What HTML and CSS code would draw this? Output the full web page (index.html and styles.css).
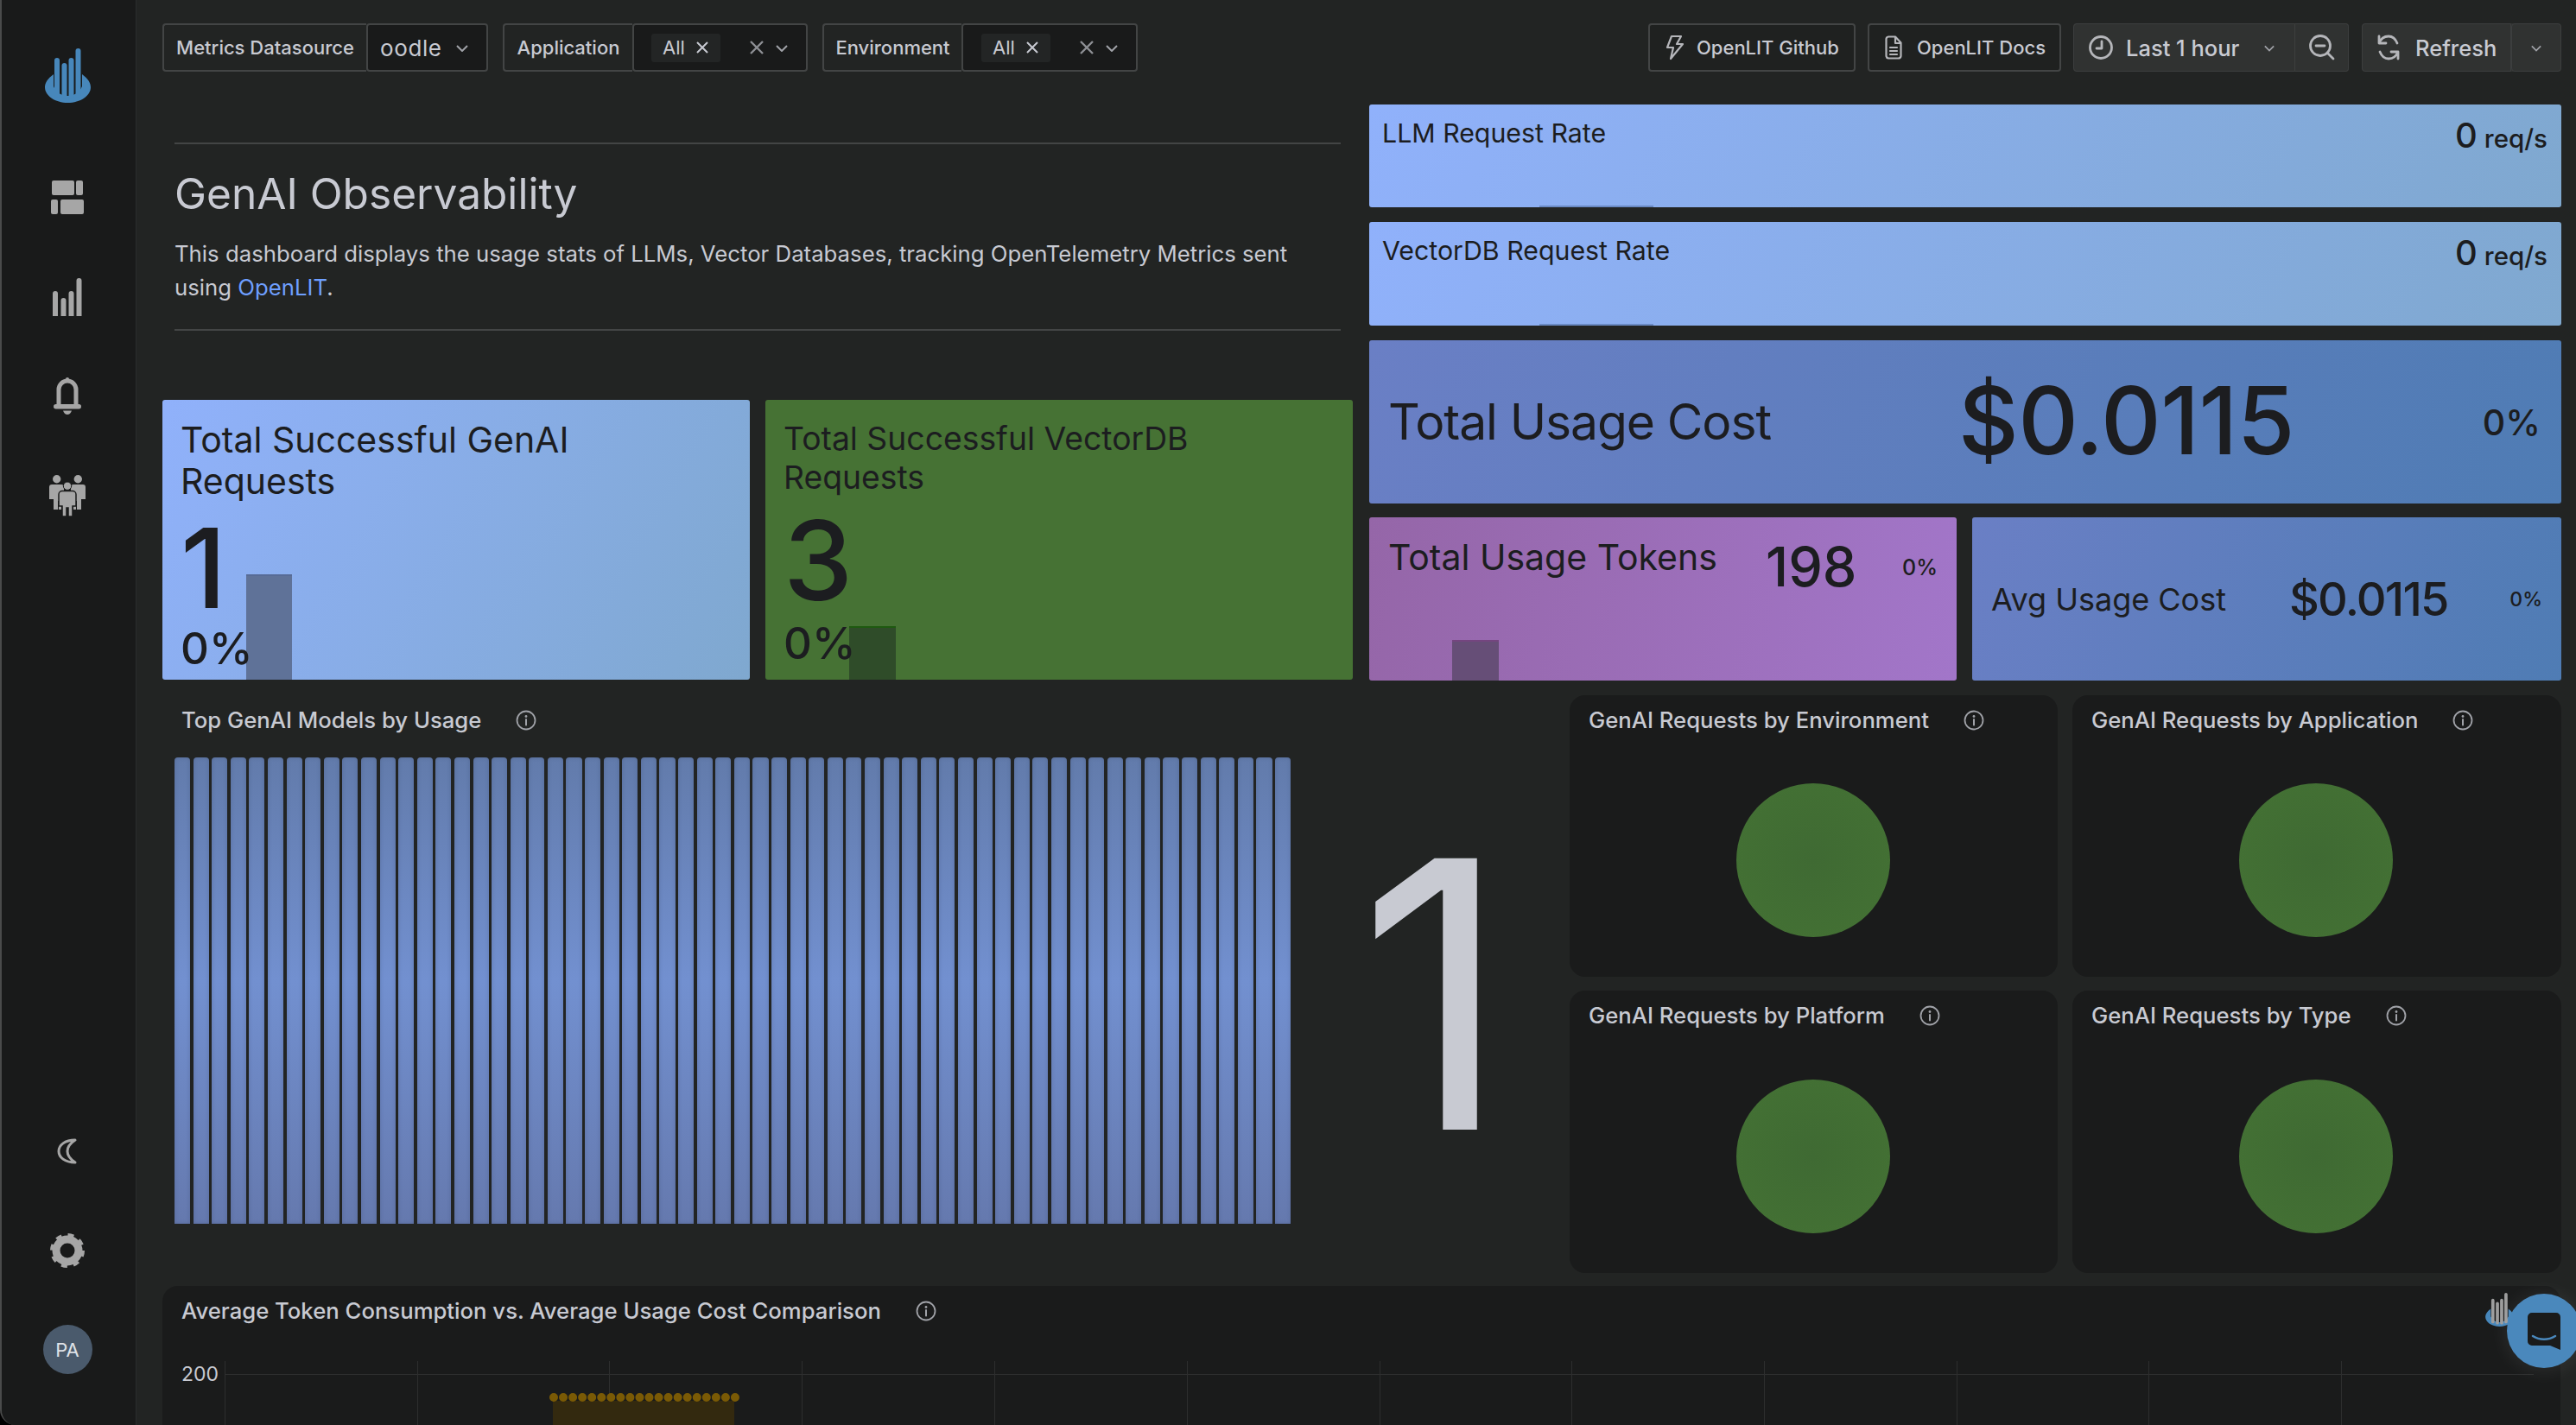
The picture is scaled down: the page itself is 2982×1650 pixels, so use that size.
FILE: index.html
```html
<!DOCTYPE html>
<html lang="en">
<head>
<meta charset="utf-8">
<title>GenAI Observability</title>
<link rel="stylesheet" href="styles.css">
</head>
<body>
<svg class="defs" width="0" height="0" aria-hidden="true">
  <symbol id="logo" viewBox="0 0 53 63">
    <path class="logo-bowl" d="M10 30C3 35 0 40 0 45C0 55 12 63 26.500 63C41 63 53 55 53 45C53 40 50 35 43 30L43 44C40 51 34 55 26.500 55C19 55 13 51 10 44Z"/>
    <g class="logo-bars">
      <path d="M14 54V14"/><path d="M22.500 56V20"/><path d="M30.500 56V14"/><path d="M38.500 54V3"/>
    </g>
  </symbol>
  <symbol id="info" viewBox="0 0 24 24">
    <circle cx="12" cy="12" r="10.500" fill="none" stroke="currentColor" stroke-width="1.800"/>
    <circle cx="12" cy="7.500" r="1.400" fill="currentColor"/>
    <path d="M12 11v6.500" stroke="currentColor" stroke-width="2" stroke-linecap="round"/>
  </symbol>
</svg>
<div class="app">
  <aside class="sidebar">
    <div class="brand">
      <svg class="brand-logo" width="53" height="63"><use href="#logo"/></svg>
    </div>
    <nav class="nav">
      <a class="nav-item">
        <svg width="38" height="39" viewBox="0 0 38 39" fill="#a6a6a6"><rect x="1" width="26" height="17" rx="2"/><rect x="29" width="8" height="17" rx="2"/><rect y="22" width="8" height="17" rx="2"/><rect x="11" y="22" width="27" height="17" rx="2"/></svg>
      </a>
      <a class="nav-item">
        <svg width="34" height="44" viewBox="0 0 34 44" fill="#a6a6a6"><path d="M0 18a3 3 0 0 1 6 0v26H0zM9.500 26a3 3 0 0 1 6 0v18h-6zM18.500 18a3 3 0 0 1 6 0v26h-6zM27.500 3a3 3 0 0 1 6 0v41h-6z"/></svg>
      </a>
      <a class="nav-item">
        <svg width="32" height="43" viewBox="0 0 32 43" fill="#a6a6a6"><path d="M6 32V14a10 10 0 0 1 20 0v18" fill="none" stroke="#a6a6a6" stroke-width="5"/><rect y="31" width="32" height="5.500" rx="2.700"/><rect x="14" width="4" height="6" rx="2"/><path d="M11 38.500h10c-1 3-3 4.500-5 4.500s-4-1.500-5-4.500z"/></svg>
      </a>
      <a class="nav-item">
        <svg width="42" height="48" viewBox="0 0 42 48" fill="#a6a6a6"><circle cx="8.700" cy="4.700" r="4.700"/><circle cx="33.300" cy="4.700" r="4.700"/><path d="M3 11h11a3 3 0 0 1 3 3v14h-3v12h-3V30h-1v10H5V28H0V14a3 3 0 0 1 3-3zM28 11h11a3 3 0 0 1 3 3v14h-5v12h-5V30h-1v10h-3V28h-3V14a3 3 0 0 1 3-3z"/><circle cx="21" cy="12.700" r="4.700" stroke="#191a1a" stroke-width="1"/><path d="M15 18.500h12a4 4 0 0 1 4 4V36h-4v12h-5V38h-2v10h-5V36h-4V22.500a4 4 0 0 1 4-4z" stroke="#191a1a" stroke-width="1.500"/></svg>
      </a>
    </nav>
    <div class="nav nav-bottom">
      <a class="nav-item">
        <svg width="24" height="30" viewBox="0 0 24 30" fill="none" stroke="#a6a6a6" stroke-width="3"><path d="M21 2C9 2 2 8 2 15s7 13 19 13C15 24 12 20 12 15S15 6 21 2z" stroke-linejoin="round"/></svg>
      </a>
      <a class="nav-item">
        <svg width="40" height="40" viewBox="0 0 40 40" fill="none" stroke="#a6a6a6"><circle cx="20" cy="20" r="13" stroke-width="9"/><circle cx="20" cy="20" r="17" stroke-width="6" stroke-dasharray="6.500 6.850"/></svg>
      </a>
      <a class="nav-item">
        <span class="avatar">PA</span>
      </a>
    </div>
  </aside>

  <main class="main">
    <header class="toolbar">
      <div class="var">
        <span class="var-label var-label-ds">Metrics Datasource</span>
        <span class="var-select var-select-ds"><span class="var-value">oodle</span>
          <svg class="caret" width="14" height="8" viewBox="0 0 14 8"><path d="M1 1l6 6 6-6"/></svg></span>
      </div>
      <div class="var">
        <span class="var-label var-label-app">Application</span>
        <span class="var-select var-select-app"><span class="chip">All <svg class="x-small" width="14" height="14" viewBox="0 0 14 14"><path d="M1 1l12 12M13 1L1 13"/></svg></span>
          <svg class="x-large" width="16" height="16" viewBox="0 0 16 16"><path d="M1 1l14 14M15 1L1 15"/></svg>
          <svg class="caret" width="14" height="8" viewBox="0 0 14 8"><path d="M1 1l6 6 6-6"/></svg></span>
      </div>
      <div class="var">
        <span class="var-label var-label-env">Environment</span>
        <span class="var-select var-select-env"><span class="chip">All <svg class="x-small" width="14" height="14" viewBox="0 0 14 14"><path d="M1 1l12 12M13 1L1 13"/></svg></span>
          <svg class="x-large" width="16" height="16" viewBox="0 0 16 16"><path d="M1 1l14 14M15 1L1 15"/></svg>
          <svg class="caret" width="14" height="8" viewBox="0 0 14 8"><path d="M1 1l6 6 6-6"/></svg></span>
      </div>
      <div class="toolbar-right">
        <a class="btn btn-github">
          <svg class="tb-icon" width="22" height="30" viewBox="0 0 22 30"><path d="M7 2h11l-5 9h7L6 28l3-13H2z"/></svg>OpenLIT Github</a>
        <a class="btn btn-docs">
          <svg class="tb-icon" width="20" height="28" viewBox="0 0 20 28"><path d="M4 1.500h8l6.500 7V24a3 3 0 0 1-3 2.500H4A3 3 0 0 1 1.500 24V4A3 3 0 0 1 4 1.500zM12 1.500V9h6.500M6 14h8M6 18h8M6 22h8"/></svg>OpenLIT Docs</a>
        <div class="btn-group time">
          <span class="seg seg-time">
            <svg class="tb-icon tb-icon-bold" width="28" height="28" viewBox="0 0 28 28"><circle cx="14" cy="14" r="12.500"/><path d="M15 7v8H9"/></svg>
            <span class="seg-text">Last 1 hour</span>
            <svg class="caret" width="12" height="8" viewBox="0 0 14 8"><path d="M1 1l6 6 6-6"/></svg>
          </span>
          <span class="seg seg-zoom">
            <svg class="tb-icon tb-icon-bold" width="30" height="30" viewBox="0 0 30 30"><circle cx="13" cy="13" r="11.500"/><path d="M8 13h10M21 21l7 7"/></svg>
          </span>
        </div>
        <div class="btn-group refresh">
          <span class="seg seg-refresh">
            <svg class="tb-icon tb-icon-bold" width="28" height="30" viewBox="0 0 28 30"><path d="M3 2v8h8M25 28v-8h-8M24 10C22 5 18 2 14 2 9 2 5 5 3 10M4 20c2 5 6 8 10 8 5 0 9-3 11-8"/></svg>
            <span class="seg-text">Refresh</span>
          </span>
          <span class="seg seg-caret"><svg class="caret" width="12" height="8" viewBox="0 0 14 8"><path d="M1 1l6 6 6-6"/></svg></span>
        </div>
      </div>
    </header>

    <section class="top-row">
      <div class="top-left">
        <div class="text-panel">
          <div class="text-inner">
            <h1 class="title">GenAI Observability</h1>
            <p class="desc">This dashboard displays the usage stats of LLMs, Vector Databases, tracking OpenTelemetry Metrics sent using <a class="link">OpenLIT</a>.</p>
          </div>
        </div>
        <div class="stat-row">
          <div class="stat stat-blue stat-big">
            <div class="big-title">Total Successful GenAI Requests</div>
            <div class="big-num">1</div>
            <div class="big-pct">0%</div>
            <span class="spark spark-1"></span>
          </div>
          <div class="stat stat-green stat-big">
            <div class="big-title big-title-2">Total Successful VectorDB Requests</div>
            <div class="big-num big-num-2">3</div>
            <div class="big-pct big-pct-2">0%</div>
            <span class="spark spark-2"></span>
          </div>
        </div>
      </div>
      <div class="top-right">
        <div class="stat stat-blue rate">
          <span class="rate-title">LLM Request Rate</span>
          <span class="rate-val"><b>0</b> req/s</span>
          <span class="spark spark-rate"></span>
        </div>
        <div class="stat stat-blue rate rate-2">
          <span class="rate-title">VectorDB Request Rate</span>
          <span class="rate-val"><b>0</b> req/s</span>
          <span class="spark spark-rate"></span>
        </div>
        <div class="stat stat-indigo cost">
          <span class="cost-title">Total Usage Cost</span>
          <span class="cost-val">$0.0115</span>
          <span class="cost-pct">0%</span>
        </div>
        <div class="stat-pair">
          <div class="stat stat-purple tokens">
            <span class="tokens-title">Total Usage Tokens</span>
            <span class="tokens-val">198</span>
            <span class="tokens-pct">0%</span>
            <span class="spark spark-3"></span>
          </div>
          <div class="stat stat-indigo avg">
            <span class="avg-title">Avg Usage Cost</span>
            <span class="avg-val">$0.0115</span>
            <span class="avg-pct">0%</span>
          </div>
        </div>
      </div>
    </section>

    <section class="mid-row">
      <div class="models">
        <div class="panel-head">Top GenAI Models by Usage<svg class="info" width="24" height="24"><use href="#info"/></svg></div>
        <div class="models-body">
          <div class="bars">
            <i></i><i></i><i></i><i></i><i></i><i></i><i></i><i></i><i></i><i></i>
            <i></i><i></i><i></i><i></i><i></i><i></i><i></i><i></i><i></i><i></i>
            <i></i><i></i><i></i><i></i><i></i><i></i><i></i><i></i><i></i><i></i>
            <i></i><i></i><i></i><i></i><i></i><i></i><i></i><i></i><i></i><i></i>
            <i></i><i></i><i></i><i></i><i></i><i></i><i></i><i></i><i></i><i></i>
            <i></i><i></i><i></i><i></i><i></i><i></i><i></i><i></i><i></i><i></i>
          </div>
          <div class="giant">1</div>
        </div>
      </div>
      <div class="pies">
        <div class="panel pie-panel">
          <div class="panel-head">GenAI Requests by Environment<svg class="info" width="24" height="24"><use href="#info"/></svg></div>
          <div class="pie-body"><span class="pie"></span></div>
        </div>
        <div class="panel pie-panel">
          <div class="panel-head">GenAI Requests by Application<svg class="info" width="24" height="24"><use href="#info"/></svg></div>
          <div class="pie-body"><span class="pie"></span></div>
        </div>
        <div class="panel pie-panel">
          <div class="panel-head">GenAI Requests by Platform<svg class="info" width="24" height="24"><use href="#info"/></svg></div>
          <div class="pie-body"><span class="pie"></span></div>
        </div>
        <div class="panel pie-panel">
          <div class="panel-head">GenAI Requests by Type<svg class="info" width="24" height="24"><use href="#info"/></svg></div>
          <div class="pie-body"><span class="pie"></span></div>
        </div>
      </div>
    </section>

    <section class="panel trend">
      <div class="panel-head">Average Token Consumption vs. Average Usage Cost Comparison<svg class="info" width="24" height="24"><use href="#info"/></svg></div>
      <div class="trend-body">
        <span class="axis-label">200</span>
        <svg class="plot" width="2674" height="90" viewBox="0 0 2674 90">
          <g class="grid-lines">
            <path d="M0 15.500H2673"/>
            <path d="M.5 0V90M223.500 0V90M445.500 0V90M668.500 0V90M891.500 0V90M1114.500 0V90M1337.500 0V90M1559.500 0V90M1782.500 0V90M2005.500 0V90M2227.500 0V90M2450.500 0V90"/>
          </g>
          <rect class="band" x="380" y="46" width="210" height="44"/>
          <path class="dots" d="M381 42H591"/>
        </svg>
      </div>
    </section>
  </main>
</div>
<svg class="corner-logo" width="33" height="39"><use href="#logo"/></svg>
<div class="chat">
  <svg width="38" height="43" viewBox="0 0 38 43"><path class="chat-bubble" d="M5 0h28a5 5 0 0 1 5 5v38l-12-5H5a5 5 0 0 1-5-5V5a5 5 0 0 1 5-5z"/><path class="chat-smile" d="M6 27c8 5 18 5 26 0"/></svg>
</div>
</body>
</html>
```
FILE: styles.css
```css
* { box-sizing: border-box; }
html, body { margin: 0; height: 100%; }
body {
  width: 2982px;
  height: 1650px;
  overflow: hidden;
  position: relative;
  background: #000;
  font-family: Inter, "Liberation Sans", sans-serif;
  color: #c8cad2;
}
.defs { position: absolute; }
.logo-bowl { fill: #4787bb; }
.logo-bars path { stroke: currentColor; stroke-width: 6; stroke-linecap: round; fill: none; }
.brand-logo { color: #4787bb; display: block; }
.app {
  display: flex;
  width: 2982px;
  height: 1650px;
  background: #222423;
  border-left: 2px solid #4a4b4b;
  border-bottom-left-radius: 18px;
  overflow: hidden;
}

/* sidebar */
.sidebar {
  width: 156px;
  flex: none;
  background: #191a1a;
  border-right: 1px solid #2b2d2d;
  display: flex;
  flex-direction: column;
  align-items: center;
  padding: 56px 3px 30px 0;
}
.brand { height: 115px; }
.nav { display: flex; flex-direction: column; }
.nav-bottom { margin-top: auto; }
.nav-item { height: 115px; width: 100px; display: flex; align-items: center; justify-content: center; }
.avatar {
  width: 57px; height: 57px; border-radius: 50%;
  background: #4a5a6c; color: #dfe2e7;
  display: flex; align-items: center; justify-content: center;
  font-size: 22px;
}

/* main */
.main { flex: 1; min-width: 0; padding: 27px 17px 0 30px; display: flex; flex-direction: column; }
.toolbar { display: flex; height: 56px; flex: none; margin-bottom: 38px; }
.var { display: flex; height: 56px; margin-right: 17px; }
.var-label {
  display: flex; align-items: center; justify-content: center;
  border: 2px solid #434545; border-right: 0;
  border-radius: 4px 0 0 4px;
  font-size: 22px; font-weight: 500; color: #c8cad2;
}
.var-label-ds { width: 236px; }
.var-label-app { width: 150px; }
.var-label-env { width: 161px; }
.var-select {
  display: flex; align-items: center;
  background: #191a1a;
  border: 2px solid #434545;
  border-radius: 4px;
}
.var-select-ds { width: 141px; padding-left: 14px; }
.var-select-app { width: 203px; padding-left: 20px; }
.var-select-env { width: 204px; padding-left: 21px; }
.var-value { font-size: 26px; width: 88px; letter-spacing: .6px; }
.caret { fill: none; stroke: #a0a2a8; stroke-width: 2; flex: none; margin-top: 2px; }
.chip {
  display: flex; align-items: center; gap: 13px;
  width: 80px; height: 33px; padding-left: 13px;
  background: #232525; border-radius: 3px;
  font-size: 22px;
}
.x-small { fill: none; stroke: #c8cad2; stroke-width: 2; }
.x-large { fill: none; stroke: #8e9095; stroke-width: 2.400; margin-left: 34px; margin-right: 14px; flex: none; }
.toolbar-right { margin-left: auto; display: flex; }
.btn {
  display: flex; align-items: center; gap: 14px;
  height: 56px; padding-left: 18px;
  border: 2px solid #434545; border-radius: 4px;
  background: #1f2120;
  font-size: 22px; font-weight: 500; color: #c8cad2;
}
.btn-github { width: 240px; margin-right: 14px; }
.btn-docs { width: 224px; margin-right: 14px; gap: 17px; }
.tb-icon { fill: none; stroke: #b5b6ba; stroke-width: 2.200; flex: none; stroke-linejoin: round; stroke-linecap: round; }
.tb-icon-bold { stroke-width: 2.800; }
.btn-group { display: flex; height: 56px; background: #303231; border-radius: 4px; font-size: 25.500px; font-weight: 500; }
.time { width: 319px; margin-right: 15px; }
.refresh { width: 231px; }
.seg { display: flex; align-items: center; border: 1px solid #3c3e3e; }
.seg-time { width: 257px; padding-left: 17px; border-radius: 4px 0 0 4px; }
.seg-time .seg-text { margin-left: 15px; width: 160px; }
.seg-zoom { width: 62px; justify-content: center; border-left: 0; border-radius: 0 4px 4px 0; }
.seg-refresh { width: 173px; padding-left: 16px; border-radius: 4px 0 0 4px; gap: 17px; }
.seg-caret { width: 58px; justify-content: center; border-radius: 4px; }

/* top row */
.top-row { display: grid; grid-template-columns: 1378px 1380px; column-gap: 19px; flex: none; }
.top-left { display: flex; flex-direction: column; }
.text-panel { height: 342px; padding: 44px 14px 0; }
.text-inner { height: 218px; border-top: 2px solid #434545; border-bottom: 2px solid #434545; padding-top: 29px; }
.title { margin: 0 0 22px; font-size: 49.600px; line-height: 56px; font-weight: 400; color: #c8cad2; }
.desc { margin: 0; font-size: 25.750px; line-height: 39px; color: #c8cad2; width: 1320px; }
.link { color: #6e9fff; }
.stat-row { display: grid; grid-template-columns: 680px 680px; column-gap: 18px; }
.stat { position: relative; border-radius: 3px; color: #1c1d20; overflow: hidden; }
.stat-blue { background: linear-gradient(120deg, #90b1fb 0%, #7fa8cf 100%); }
.stat-green { background: #467234; }
.stat-indigo { background: linear-gradient(110deg, #6a7fc5 0%, #4f7cb4 100%); }
.stat-purple { background: linear-gradient(100deg, #9566a8 0%, #a276c9 100%); }
.spark { position: absolute; bottom: 0; display: block; z-index: 0; }
.stat-big { height: 324px; padding: 22px 21px 0 21px; }
.stat-big > div { position: relative; z-index: 1; }
.big-title { font-size: 41px; line-height: 48px; width: 520px; height: 97px; }
.big-title-2 { font-size: 37.300px; line-height: 45px; height: 92px; }
.big-num { font-size: 128px; line-height: 128px; font-weight: 500; margin-top: 12px; }
.big-num-2 { margin-top: 8px; }
.big-pct { font-size: 51px; line-height: 54px; font-weight: 500; margin-top: 2px; }
.big-pct-2 { margin-top: 5px; }
.spark-1 { left: 97px; width: 53px; height: 122px; background: #5f7298; border-top: 2px solid #576b96; }
.spark-2 { left: 97px; width: 54px; height: 62px; background: #2f4c29; border-top: 2px solid #1f5a10; }
.top-right { display: flex; flex-direction: column; }
.rate { height: 119px; margin-bottom: 17px; padding: 15px 10px 0 15px; display: flex; justify-content: space-between; align-items: flex-start; }
.rate-2 { height: 120px; }
.rate-title { font-size: 30.300px; line-height: 36px; }
.rate-val { font-size: 29.500px; line-height: 44px; font-weight: 500; margin-top: -1px; margin-right: 6px; }
.rate-val b { font-size: 40px; font-weight: 500; }
.spark-rate { left: 197px; width: 132px; height: 2px; background: #6a8ac4; }
.cost { height: 189px; margin-bottom: 16px; display: flex; align-items: center; padding: 0 24px 0 22px; }
.cost-title { font-size: 57px; width: 660px; letter-spacing: -1.100px; }
.cost-val { font-size: 108px; font-weight: 500; width: 378px; margin-top: -4px; letter-spacing: -.5px; }
.cost-pct { font-size: 41px; font-weight: 500; margin-left: auto; }
.stat-pair { display: grid; grid-template-columns: 680px 682px; column-gap: 18px; }
.tokens { height: 189px; display: flex; align-items: flex-start; padding: 20px 22px 0 22px; }
.tokens-title { font-size: 41px; line-height: 52px; width: 437px; }
.tokens-val { font-size: 63px; line-height: 74px; font-weight: 500; }
.tokens-pct { font-size: 25px; line-height: 34px; font-weight: 500; margin-left: auto; margin-top: 21px; }
.spark-3 { left: 96px; width: 54px; height: 47px; background: #664e77; border-top: 2px solid #74457f; }
.avg { height: 189px; display: flex; align-items: center; padding: 0 22px 0 22px; }
.avg-title { font-size: 36px; width: 345px; }
.avg-val { font-size: 54px; font-weight: 500; letter-spacing: -1.800px; }
.avg-pct { font-size: 23px; font-weight: 500; margin-left: auto; }

/* mid row */
.mid-row { display: grid; grid-template-columns: 1629px 1148px; margin-top: 17px; flex: none; }
.panel { background: #1a1b1b; border-radius: 18px; }
.panel-head {
  height: 56px; padding: 1px 22px 0;
  display: flex; align-items: center; gap: 40px;
  font-size: 25.700px; font-weight: 500; color: #c8cad2;
}
.info { color: #a0a2a8; flex: none; }
.models { height: 669px; display: flex; flex-direction: column; }
.models-body { display: flex; padding: 16px 0 0 14px; }
.bars { display: flex; width: 1292px; height: 540px; gap: 3.500px; flex: none; }
.bars i {
  flex: 1; display: block; border-radius: 4px 4px 0 0;
  background: linear-gradient(180deg, #627bab 0%, #7290d0 48%, #6579ae 100%);
  box-shadow: inset 0 0 4px rgba(40,50,80,.25);
}
.giant { font-size: 432px; line-height: 540px; color: #c8cad2; margin-left: 78px; height: 540px; margin-top: 4px; }
.pies { display: grid; grid-template-columns: 565px 566px; grid-template-rows: 326px 327px; gap: 16px 17px; }
.pie-panel { display: flex; flex-direction: column; }
.pie-body { flex: 1; display: flex; align-items: center; justify-content: center; }
.pie { width: 178px; height: 178px; border-radius: 50%; background: radial-gradient(circle, #3f6a33 0%, #447234 100%); display: block; margin-left: -2px; }

/* trend */
.trend { margin-top: 15px; height: 400px; width: 2776px; }
.trend-body { display: flex; padding: 31px 0 0 22px; }
.axis-label { width: 50px; font-size: 23px; line-height: 30px; flex: none; }
.plot { display: block; flex: none; }
.grid-lines path { stroke: #2d2e2e; stroke-width: 1; fill: none; }
.band { fill: #33290f; }
.dots { stroke: #7a5a05; stroke-width: 10; stroke-linecap: round; stroke-dasharray: 0 11.050; fill: none; }

/* overlays */
.corner-logo { position: absolute; left: 2877px; top: 1497px; color: #9d9d9d; }
.corner-logo .logo-bowl { fill: currentColor; }
.chat {
  position: absolute; left: 2902px; top: 1498px;
  width: 86px; height: 86px; border-radius: 50%;
  background: #4a88bc;
  box-shadow: 0 2px 24px rgba(255,255,255,.09);
  display: flex; align-items: center; justify-content: center;
}
.chat-bubble { fill: #1a1b1b; }
.chat-smile { fill: none; stroke: #4a88bc; stroke-width: 2.500; stroke-linecap: round; }
```
